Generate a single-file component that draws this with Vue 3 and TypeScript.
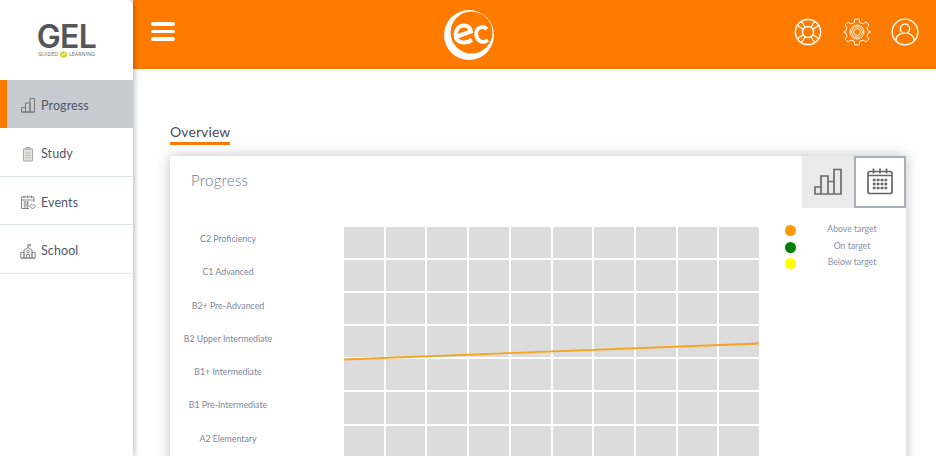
<script setup lang="ts">
const nav = ['Progress', 'Study', 'Events', 'School']
const levels = ['C2 Proficiency', 'C1 Advanced', 'B2+ Pre-Advanced', 'B2 Upper Intermediate', 'B1+ Intermediate', 'B1 Pre-Intermediate', 'A2 Elementary']
const legend = [
  { label: 'Above target', color: '#ff9900' },
  { label: 'On target', color: '#008000' },
  { label: 'Below target', color: '#ffff00' },
]
const cells = Array.from({ length: 70 }, (_, i) => i)
</script>

<template>
  <div class="page">
    <aside class="side">
      <div class="logo">
        <div class="gel">GEL</div>
        <div class="tag">
          <span>GUIDED</span>
          <svg width="9" height="9" viewBox="0 0 10 10"><path d="M5 .8 6.400 2l1.800-.1.200 1.800L9.600 5 8.400 6.300l-.2 1.800-1.800-.1L5 9.200 3.700 8l-1.800.1-.2-1.800L.4 5l1.300-1.300.2-1.800L3.700 2Z" fill="#d6d43a"/><path d="M3 6.500 7 3.500" stroke="#fff" stroke-width="1"/></svg>
          <span>LEARNING</span>
        </div>
      </div>
      <nav>
        <a v-for="(n, i) in nav" :key="n" class="item" :class="{ active: i === 0 }">
          <svg v-if="i === 0" class="ic" viewBox="0 0 16 16" fill="none" stroke="#76787d" stroke-width="1"><path d="M1.500 15V10.500H5.500V15ZM5.500 15V6H10V15ZM10 15V1.500H14.500V15ZM1.500 15H14.500"/></svg>
          <svg v-else-if="i === 1" class="ic" viewBox="0 0 16 16" fill="#e2e2de" stroke="#ababa7" stroke-width="1"><path d="M3.500 3H12.500V15H3.500Z"/><path d="M6 3V1.500H10V3Z"/><path d="M5.500 7H10.500M5.500 9.500H10.500M5.500 12H10.500" stroke-width=".7"/></svg>
          <svg v-else-if="i === 2" class="ic" viewBox="0 0 16 16" fill="none" stroke="#85868a" stroke-width="1"><path d="M1.500 3H14V8M9 14.500H1.500V3M1.500 6H14"/><path d="M4 1.500V4M7.500 1.500V4M11.500 1.500V4"/><path d="M3.500 8H9M3.500 10H9M3.500 12H9M5 7V14M7.500 7V14" stroke-width=".8"/><path d="M12.500 15 10 12.400C9.300 11 11.500 9.800 12.500 11.200 13.500 9.800 15.700 11 15 12.400Z"/></svg>
          <svg v-else class="ic" viewBox="0 0 16 16" fill="none" stroke="#85868a" stroke-width="1"><path d="M.8 15V9.500H4V15ZM12 15V9.500H15.200V15ZM4 15V7L8 4.500 12 7V15ZM.8 15H15.200"/><path d="M8 4.500V1M8 1.300H10.500V3H8"/><circle cx="8" cy="8.500" r="1.300"/><path d="M6.500 15V11.500H9.500V15"/></svg>
          <span>{{ n }}</span>
        </a>
      </nav>
    </aside>

    <div class="main">
      <header class="top">
        <div class="burger"><i></i><i></i><i></i></div>
        <svg class="ec" viewBox="0 0 50 50">
          <circle cx="25" cy="25" r="25" fill="#fff"/>
          <circle cx="27.500" cy="22.500" r="21" fill="#ff7b00"/>
          <path d="M13 26.500 27 21.500C26 16 21 14.500 17 16 12 18 11 24 12 28 14 33 22 34 28 30" fill="none" stroke="#fff" stroke-width="4"/>
          <path d="M43 19C40 16 35 16.500 33 20 31 24 32.500 30 37 31.500 39.500 32.500 42 31.500 44 30" fill="none" stroke="#fff" stroke-width="3.800"/>
        </svg>
        <div class="actions">
          <svg viewBox="0 0 30 30" fill="none" stroke="#fff" stroke-width="1.600">
            <circle cx="15" cy="15" r="13.500"/><circle cx="15" cy="15" r="6"/>
            <path d="M20.100 18.100 26.100 21.700M18.100 20.100 21.700 26.100M9.900 18.100 3.900 21.700M11.900 20.100 8.300 26.100M20.100 11.900 26.100 8.300M18.100 9.900 21.700 3.900M9.900 11.900 3.900 8.300M11.900 9.900 8.300 3.900" stroke-width="1.300"/>
          </svg>
          <svg viewBox="0 0 30 30" fill="none" stroke="#fff" stroke-width="1">
            <path d="M12.700 1.200H17.300L18 5 21.400 6.400 24.600 4.200 27.800 7.500 25.600 10.600 27 14 29.500 14.800V15.200L27 16 25.600 19.400 27.800 22.500 24.600 25.800 21.400 23.600 18 25 17.300 28.800H12.700L12 25 8.600 23.600 5.400 25.800 2.200 22.500 4.400 19.400 3 16 .5 15.200V14.800L3 14 4.400 10.600 2.200 7.500 5.400 4.200 8.600 6.400 12 5Z"/>
            <circle cx="15" cy="15" r="7.500"/><circle cx="15" cy="15" r="5.700"/><circle cx="15" cy="15" r="3.600"/>
          </svg>
          <svg viewBox="0 0 30 30" fill="none" stroke="#fff" stroke-width="1.500">
            <circle cx="15" cy="15" r="13.800"/><circle cx="15" cy="11.500" r="5"/>
            <path d="M5.500 24.500V22.500C5.500 19 9 17.500 11.500 16.500M24.500 24.500V22.500C24.500 19 21 17.500 18.500 16.500"/>
          </svg>
        </div>
      </header>

      <section class="content">
        <h2 class="over">Overview</h2>
        <div class="card">
          <div class="head">
            <h3>Progress</h3>
            <div class="tabs">
              <button class="tab">
                <svg width="28" height="27" viewBox="0 0 28 27" fill="none" stroke="#6b6b6b" stroke-width="1.700"><path d="M1 26V19H7V26ZM7 26V8H14V26ZM14 26V13.500H20V26ZM20 26V1.500H27V26ZM1 26H27"/></svg>
              </button>
              <button class="tab on">
                <svg width="26" height="27" viewBox="0 0 26 27" fill="none" stroke="#666" stroke-width="1.700"><rect x="1" y="3.500" width="24" height="22" rx="2"/><path d="M1 7.500H25M6.500 .5V5.500M13 .5V5.500M19.500 .5V5.500"/><path d="M5.800 12H20.200M5.800 16H20.200M5.800 20H20.200" stroke-width="2.400" stroke-dasharray="2.800 1.100"/></svg>
              </button>
            </div>
          </div>
          <div class="body">
            <ul class="labels">
              <li v-for="l in levels" :key="l">{{ l }}</li>
            </ul>
            <div class="chart">
              <div class="grid"><i v-for="c in cells" :key="c"></i></div>
              <svg class="line" width="415" height="40" viewBox="0 0 415 40"><path d="M0 28.500 415 12.500" stroke="#f5a41c" stroke-width="1.800"/></svg>
            </div>
            <ul class="legend">
              <li v-for="l in legend" :key="l.label">
                <i :style="{ background: l.color }"></i><span>{{ l.label }}</span>
              </li>
            </ul>
          </div>
        </div>
      </section>
    </div>
  </div>
</template>

<style>
html, body { margin: 0; height: 100%; overflow: hidden; background: #fff; }
</style>

<style scoped>
* { box-sizing: border-box; }
.page { display: flex; width: 936px; height: 456px; overflow: hidden; font-family: Lato, "Open Sans", sans-serif; color: #4f5669; }
.side { position: relative; z-index: 2; flex: 0 0 133px; background: #fff; border-top-right-radius: 6px; box-shadow: 1px 0 6px rgba(0,0,0,.3); }
.logo { height: 80px; display: flex; flex-direction: column; align-items: center; padding-top: 25px; }
.gel { font: 600 32px/24px Inter, sans-serif; color: #55565a; letter-spacing: -.6px; }
.tag { display: flex; align-items: center; gap: 1px; font: 5.300px/8px "Open Sans", sans-serif; color: #6c6c6c; margin-top: 1px; height: 8px; }
.item { display: flex; align-items: center; height: 48.500px; padding: 4px 0 0 20px; gap: 5px; font-size: 12.500px; letter-spacing: .1px; border-bottom: 1.500px solid #dfe3ea; }
.item.active { height: 48px; padding-top: 2px; background: #c9cbd2; border-left: 7px solid #ff7b00; padding-left: 13px; border-bottom: 0; }
.ic { width: 16px; height: 16px; flex: none; }
.main { flex: 1; min-width: 0; }
.top { position: relative; height: 69px; background: #ff7b00; display: flex; align-items: center; justify-content: space-between; padding: 0 17px 6px 18px; }
.burger { display: flex; flex-direction: column; gap: 4px; width: 24px; }
.burger i { height: 3.500px; border-radius: 2px; background: #fff; }
.ec { position: absolute; left: 310.500px; top: 9.500px; width: 50px; height: 50px; }
.actions { display: flex; gap: 20.500px; }
.actions svg { width: 28px; height: 28px; }
.content { padding: 55px 30px 0 37px; }
.over { margin: 0; width: 60px; height: 21px; font-size: 14px; font-weight: 400; line-height: 15px; letter-spacing: .1px; border-bottom: 3px solid #ff7b00; color: #454c60; white-space: nowrap; }
.card { margin-top: 11px; height: 320px; background: #fff; box-shadow: 0 0 12px rgba(0,0,0,.25); }
.head { display: flex; justify-content: space-between; height: 52px; }
h3 { margin: 16px 0 0 21px; font-size: 15px; line-height: 16px; font-weight: 300; color: #6f7583; letter-spacing: .3px; }
.tabs { display: flex; }
.tab { width: 52px; height: 52px; padding: 0 0 2px; border: 0; background: #eaeaea; display: flex; align-items: center; justify-content: center; }
.tab.on { background: #fff; border: 2px solid #a9afbd; }
.body { display: flex; align-items: flex-start; padding-top: 19px; }
ul { list-style: none; margin: 0; padding: 0; }
.labels { flex: 0 0 174px; padding-right: 58px; }
.labels li { height: 33.300px; line-height: 24px; text-align: center; font-size: 8.800px; color: #80869a; white-space: nowrap; }
.chart { position: relative; flex: 0 0 415px; }
.grid { display: grid; grid-template-columns: repeat(10, 1fr); grid-auto-rows: 31.100px; gap: 2px; }
.grid i { background: #dcdcdc; }
.line { position: absolute; left: 0; top: 104px; display: block; }
.legend { flex: none; margin: -5.500px 0 0 26px; }
.legend li { display: flex; align-items: center; height: 16.500px; font-size: 8.700px; color: #8b90a2; }
.legend i { width: 11px; height: 11px; border-radius: 50%; flex: none; margin-top: 2px; }
.legend span { width: 110px; padding-left: 2px; text-align: center; margin-top: -2px; }
</style>
